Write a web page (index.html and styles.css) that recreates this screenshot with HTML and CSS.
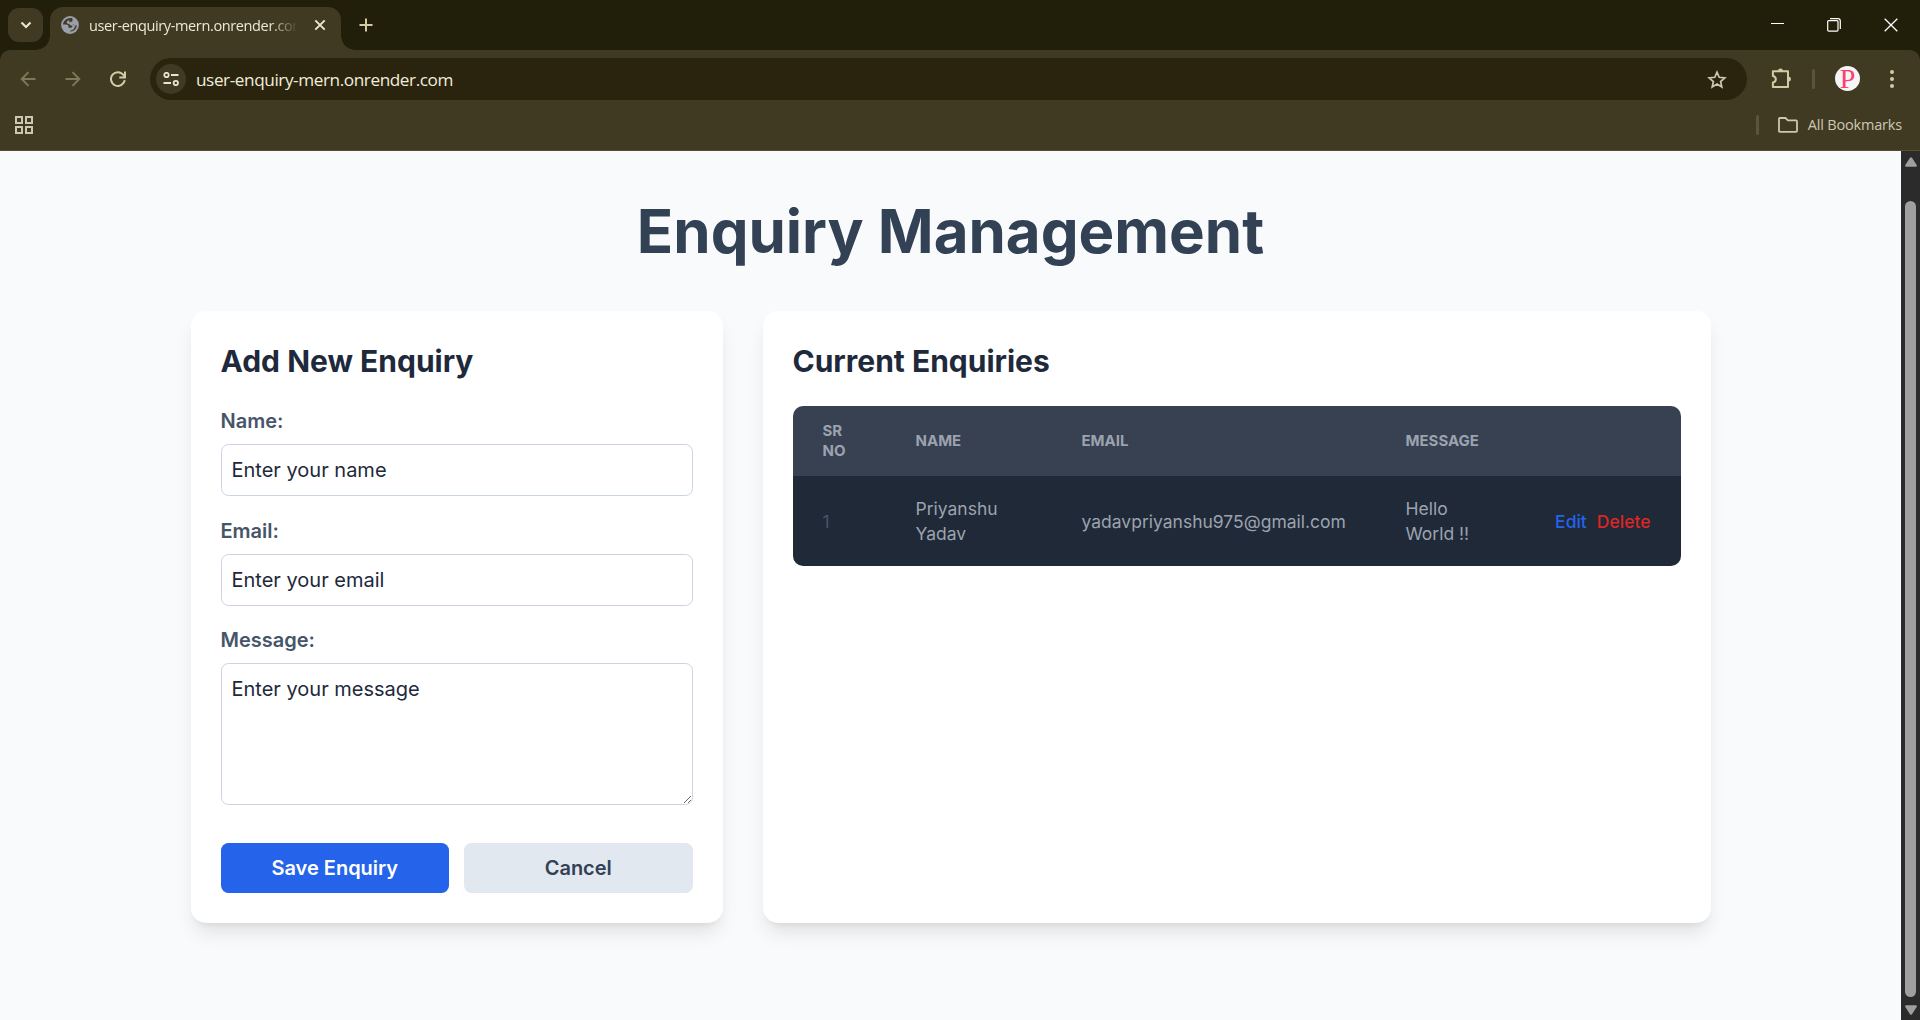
FILE: index.html
```html
<!DOCTYPE html>
<html lang="en">
<head>
<meta charset="utf-8">
<title>Enquiry Management</title>
<link rel="stylesheet" href="styles.css">
</head>
<body>
<div class="browser">
  <header class="chrome">
    <div class="tabstrip">
      <div class="tab-search"><svg width="12" height="8" viewBox="0 0 12 8" fill="none" stroke="#e8e4cf" stroke-width="2.2"><path d="M1.5 1.5 6 6l4.5-4.5"/></svg></div>
      <div class="tab">
        <svg class="globe" width="18" height="18" viewBox="0 0 18 18"><circle cx="9" cy="9" r="8.900" fill="#9aa0ab"/><path d="M9.600 2C5.500 2 2.200 5 2 8.600h3.200c1.600 0 2.300.9 2.300 2.100v1.100h1.700v3.800c3.600 0 6.400-2.700 6.700-6h-1.700c-1 0-1.700-.6-1.700-1.500H8.800V5.800h1.400c.8 0 1.300-.5 1.300-1.300V2.400C10.900 2.100 10.200 2 9.600 2Z" fill="#403a23"/><path d="M8.300 4.200c-1.700.2-2.600 1-2.600 2.200 0 1.500 2.600 1.200 3.300 2.300.5.9 1.600 1 2.700 1.100l-.9 1.600-1.700.3v3.300l3.200-1.500 2.200-3.300-3-2.500-3-.6Z" fill="#9aa0ab"/></svg>
        <span class="tab-title">user-enquiry-mern.onrender.com</span>
        <svg class="tab-close" width="12" height="12" viewBox="0 0 12 12" stroke="#ece8d4" stroke-width="1.9"><path d="M1.300 1.300l9.400 9.400M10.700 1.300l-9.400 9.400"/></svg>
      </div>
      <svg class="new-tab" width="14" height="14" viewBox="0 0 14 14" stroke="#d3cba4" stroke-width="2"><path d="M7 .5v13M.5 7h13"/></svg>
      <div class="window-controls">
        <svg width="13" height="13" viewBox="0 0 13 13" stroke="#fff"><path d="M0 5.500h13"/></svg>
        <svg width="14" height="14" viewBox="0 0 14 14" fill="none" stroke="#fff" stroke-width="1.200"><rect x=".7" y="2.600" width="10.300" height="10.500" rx="1"/><path d="M3 .7h8q2.300 0 2.300 2.300v8"/></svg>
        <svg width="14" height="14" viewBox="0 0 14 14" stroke="#fff" stroke-width="1.300"><path d="M.7.7l12.600 12.600M13.300.7.7 13.300"/></svg>
      </div>
    </div>
    <div class="toolbar">
      <div class="nav">
        <svg width="16" height="16" viewBox="0 0 16 16" fill="none" stroke="#7f7959" stroke-width="1.900"><path d="M15.500 8H2M8.500 1.200 1.700 8l6.800 6.800"/></svg>
        <svg width="16" height="16" viewBox="0 0 16 16" fill="none" stroke="#7f7959" stroke-width="1.900"><path d="M.5 8H14M7.500 1.200 14.300 8l-6.800 6.800"/></svg>
        <svg width="16" height="16" viewBox="0 0 16 16" fill="none" stroke="#d3cba4" stroke-width="2"><path d="M14.700 9.200A6.900 6.900 0 1 1 13.500 4l1.200 2M15 .5v6H9.300"/></svg>
      </div>
      <div class="omnibox">
        <span class="site-info"><svg width="16" height="14" viewBox="0 0 16 14" fill="none" stroke="#e8e4cf" stroke-width="1.800"><circle cx="3.500" cy="3" r="2.200"/><path d="M8 3h7.500M.5 11H8"/><circle cx="12.800" cy="11" r="2.200"/></svg></span>
        <span class="url">user-enquiry-mern.onrender.com</span>
        <svg class="star" width="20" height="19" viewBox="0 0 20 19" fill="none" stroke="#cdc7b2" stroke-width="1.700"><path d="M10 2.200 12.200 7.300l5.600.5-4.200 3.700 1.200 5.500L10 14.100 5.200 17l1.200-5.500L2.200 7.800l5.600-.5Z"/></svg>
      </div>
      <svg class="puzzle" width="21" height="21" viewBox="0 0 21 21"><path d="M1.900 3.200H17v15.900H1.900v-4.600c3.900-.8 3.900-5.800 0-6.600Z" fill="none" stroke="#d3cba4" stroke-width="2" stroke-linejoin="round"/><path d="M7 3a2.500 2.500 0 0 1 5 0ZM17.500 8.600a2.500 2.500 0 0 1 0 5Z" fill="#d3cba4"/></svg>
      <i class="divider"></i>
      <span class="avatar">P</span>
      <svg class="menu" width="4" height="18" viewBox="0 0 4 18" fill="#d3cba4"><circle cx="2" cy="2" r="2"/><circle cx="2" cy="9" r="2"/><circle cx="2" cy="16" r="2"/></svg>
    </div>
    <div class="bookmarks">
      <svg width="18" height="18" viewBox="0 0 18 18" fill="none" stroke="#cdc7b2" stroke-width="2"><path d="M1 1h6v6H1zM11 1h6v6h-6zM1 11h6v6H1zM11 11h6v6h-6z"/></svg>
      <i class="divider"></i>
      <svg class="folder" width="20" height="16" viewBox="0 0 20 16" fill="none" stroke="#cdc7b2" stroke-width="1.800" stroke-linejoin="round"><path d="M1 14V1.900Q1 1 1.900 1H7.500l2.300 2.300h8.300q.9 0 .9.900V14q0 .9-.9.900H1.900Q1 14.900 1 14Z"/></svg>
      <span class="bookmarks-label">All Bookmarks</span>
    </div>
  </header>
  <div class="viewport">
    <main class="page">
      <h1>Enquiry Management</h1>
      <div class="panels">
        <section class="card">
          <h2>Add New Enquiry</h2>
          <form>
            <div class="field"><label for="name">Name:</label><input id="name" type="text" placeholder="Enter your name"></div>
            <div class="field"><label for="email">Email:</label><input id="email" type="email" placeholder="Enter your email"></div>
            <div class="field"><label for="message">Message:</label><textarea id="message" placeholder="Enter your message"></textarea></div>
            <div class="actions"><button class="save" type="button">Save Enquiry</button><button class="cancel" type="button">Cancel</button></div>
          </form>
        </section>
        <section class="card">
          <h2>Current Enquiries</h2>
          <table>
            <colgroup><col class="c-no"><col class="c-name"><col class="c-email"><col class="c-message"><col></colgroup>
            <thead><tr><th>Sr No</th><th>Name</th><th>Email</th><th>Message</th><th></th></tr></thead>
            <tbody><tr><td class="num">1</td><td>Priyanshu Yadav</td><td>yadavpriyanshu975@gmail.com</td><td>Hello World !!</td><td><div class="row-actions"><a class="edit">Edit</a><a class="delete">Delete</a></div></td></tr></tbody>
          </table>
        </section>
      </div>
    </main>
    <div class="scrollbar">
      <svg width="12" height="10" viewBox="0 0 12 10" fill="#9f9f9f"><path d="M5 .8q1-1.200 2 0l4.700 7.200q.6 1.500-1 1.700H1.300Q-.3 9.500.3 8Z"/></svg>
      <span class="thumb"></span>
      <svg width="12" height="10" viewBox="0 0 12 10" fill="#9f9f9f"><path d="M5 9.200q1 1.200 2 0L11.700 2q.6-1.500-1-1.700H1.300Q-.3.500.3 2Z"/></svg>
    </div>
  </div>
</div>
</body>
</html>
```
FILE: styles.css
```css
* { box-sizing: border-box; }
body { margin: 0; font-family: Inter, sans-serif; }
.browser { width: 1920px; height: 1020px; overflow: hidden; display: flex; flex-direction: column; }
svg { display: block; flex: none; }

/* Browser frame */
.chrome { height: 151px; flex: none; background: #211e09; font-family: "Open Sans", sans-serif; }
.tabstrip { height: 50px; display: flex; padding-left: 8px; }
.tab-search { width: 35px; height: 34px; margin-top: 8px; border-radius: 11px; background: #403a23; display: flex; align-items: center; justify-content: center; }
.tab { width: 291px; height: 43px; margin: 7px 0 0 7px; padding: 0 15px 7px 11px; border-radius: 13px 13px 0 0; background: #403a23; display: flex; align-items: center; position: relative; }
.tab::before, .tab::after { content: ""; position: absolute; bottom: 0; width: 14px; height: 14px; }
.tab::before { right: 100%; background: radial-gradient(circle at 0 0, transparent 13.500px, #403a23 14px); }
.tab::after { left: 100%; background: radial-gradient(circle at 100% 0, transparent 13.500px, #403a23 14px); }
.tab-title { width: 209px; margin-left: 10px; overflow: hidden; white-space: nowrap; font-size: 14.500px; letter-spacing: -.37px; color: #ece8d4; -webkit-mask-image: linear-gradient(90deg, #000 180px, transparent 209px); mask-image: linear-gradient(90deg, #000 180px, transparent 209px); }
.tab-close { margin-left: 16px; }
.new-tab { margin: 18px 0 0 18px; }
.window-controls { margin-left: auto; display: flex; gap: 43px; padding: 18px 22px 0 0; }
.toolbar { height: 54px; padding: 8px 26px 0 20px; display: flex; align-items: flex-start; background: #403a23; border-radius: 10px 10px 0 0; }
.nav { display: flex; gap: 29px; padding-top: 12.500px; }
.omnibox { width: 1597px; height: 42px; margin-left: 24px; padding: 0 20px 0 6px; border-radius: 21px; background: #2a240e; display: flex; align-items: center; }
.site-info { width: 30px; height: 30px; border-radius: 50%; background: #403a23; display: flex; align-items: center; justify-content: center; }
.url { margin-left: 10px; font-size: 17.200px; letter-spacing: -.42px; color: #f1eddb; }
.star { margin-left: auto; }
.puzzle { margin: 10px 0 0 24px; }
.divider { width: 3px; height: 20px; border-radius: 2px; background: #5d5537; }
.toolbar .divider { margin: 11px 0 0 20px; }
.avatar { width: 25px; height: 25px; margin: 8px 0 0 20px; border-radius: 50%; background: #f5f5f5; color: #ff3d71; font: 28px/25px "Liberation Serif", serif; text-align: center; }
.menu { margin: 12px 0 0 30px; }
.bookmarks { height: 47px; display: flex; align-items: center; padding: 0 18px 4px 15px; background: #403a23; border-bottom: 1px solid #56502f; }
.bookmarks .divider { margin-left: auto; }
.folder { margin-left: 19px; }
.bookmarks-label { margin-left: 10px; font-size: 14.500px; letter-spacing: -.18px; color: #cdc7b2; position: relative; top: -1px; }

/* Page */
.viewport { flex: 1; display: flex; background: #f8fafc; }
.page { flex: 1; padding: 43px 190.500px 0; }
.scrollbar { width: 19px; padding: 6px 0 5px; background: #2b2b2b; display: flex; flex-direction: column; align-items: center; }
.thumb { width: 11px; height: 796px; margin: 34px 0 auto; border-radius: 6px; background: #9f9f9f; }
h1 { margin: 0; height: 117px; font-size: 60px; line-height: 75px; font-weight: 700; text-align: center; color: #334155; }
.panels { display: grid; grid-template-columns: 532px 948px; gap: 40px; }
.card { height: 612px; padding: 30px; border-radius: 15px; background: #fff; box-shadow: 0 12.500px 19px -4px rgba(0,0,0,.1), 0 5px 7.500px -5px rgba(0,0,0,.1); }
h2 { margin: 0 0 25px; font-size: 30px; line-height: 40px; font-weight: 700; color: #1e293b; }
form { display: flex; flex-direction: column; }
.field { display: flex; flex-direction: column; margin-bottom: 19.500px; }
label { margin-bottom: 8px; font-size: 20px; line-height: 30px; font-weight: 560; color: #475569; }
input, textarea { display: block; width: 100%; margin: 0; padding: 10px; border: 1px solid #cbd5e1; border-radius: 7.500px; background: #fff; font: 20px/30px Inter, sans-serif; outline: 0; }
input { height: 52px; }
textarea { height: 142px; resize: vertical; }
::placeholder { color: #1e293b; opacity: 1; }
.actions { display: grid; grid-template-columns: 1fr 1fr; gap: 15px; margin-top: 18.500px; }
button { height: 50px; border: 0; border-radius: 7.500px; font: 600 20px/30px Inter, sans-serif; }
.save { background: #2563eb; color: #fff; }
.cancel { background: #e2e8f0; color: #334155; }
table { width: 888px; table-layout: fixed; border-collapse: collapse; border-radius: 10px; overflow: hidden; text-align: left; color: #9ca3af; }
.c-no { width: 93px; }
.c-name { width: 166px; }
.c-email { width: 324px; }
.c-message { width: 149px; }
th { height: 70px; padding: 15px 30px; background: #374151; font-size: 15px; line-height: 20px; font-weight: 700; text-transform: uppercase; }
td { height: 90px; padding: 20px 30px; background: #1f2937; font-size: 17.500px; line-height: 25px; }
td.num { color: #475569; }
.row-actions { display: flex; justify-content: flex-end; gap: 10px; font-weight: 500; }
.edit { color: #2563eb; }
.delete { color: #dc2626; }
```
